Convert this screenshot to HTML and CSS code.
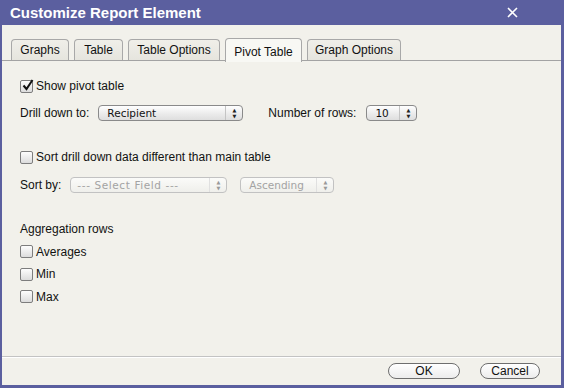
FILE: index.html
```html
<html>
    <head>
        <link rel="stylesheet" href="styles.css">
    </head>
    <body>
        <div class="dialog">
            <div class="titlebar">
                <span class="title">Customize Report Element</span>
                <svg class="close" width="11" height="11" viewBox="0 0 11 11">
                    <path d="M1 1 L10 10 M10 1 L1 10" stroke="#fff" stroke-width="1.6"/>
                </svg>
            </div>
            <div class="window">
                <div class="tabs">
                    <div class="tab" style="width:58px">Graphs</div>
                    <div class="tab" style="width:49px">Table</div>
                    <div class="tab" style="width:92px">Table Options</div>
                    <div class="tab active" style="width:77px">Pivot Table</div>
                    <div class="tab" style="width:94px">Graph Options</div>
                </div>
                <div class="panel">
                    <div class="row first">
                        <span class="check checked">
                            <svg width="13" height="13" viewBox="0 0 13 13">
                                <path d="M2.5 6.5 L5.5 10 L11.5 1" fill="none" stroke="#111" stroke-width="2"/>
                            </svg>
                        </span>
                        <span>Show pivot table</span>
                    </div>
                    <div class="row drill">
                        <span class="label">Drill down to:</span>
                        <div class="select" style="width:145px">
                            <span class="value">Recipient</span>
                            <span class="arrows">&#9650;<br>&#9660;</span>
                        </div>
                        <span class="label rows-label">Number of rows:</span>
                        <div class="select" style="width:51px">
                            <span class="value">10</span>
                            <span class="arrows">&#9650;<br>&#9660;</span>
                        </div>
                    </div>
                    <div class="row section">
                        <span class="check"></span>
                        <span>Sort drill down data different than main table</span>
                    </div>
                    <div class="row sortby">
                        <span class="label">Sort by:</span>
                        <div class="select disabled" style="width:157px">
                            <span class="value wide">--- Select Field ---</span>
                            <span class="arrows">&#9650;<br>&#9660;</span>
                        </div>
                        <div class="select disabled asc" style="width:94px">
                            <span class="value">Ascending</span>
                            <span class="arrows">&#9650;<br>&#9660;</span>
                        </div>
                    </div>
                    <div class="row section">Aggregation rows</div>
                    <div class="row item"><span class="check"></span><span>Averages</span></div>
                    <div class="row item"><span class="check"></span><span>Min</span></div>
                    <div class="row item"><span class="check"></span><span>Max</span></div>
                </div>
                <div class="footer">
                    <div class="button" style="width:72px">OK</div>
                    <div class="button" style="width:60px">Cancel</div>
                </div>
            </div>
        </div>
    </body>
</html>
```

FILE: styles.css
```css
body {
    margin: 0;
    background: #5b5f9f;
    font-family: 'Liberation Sans', Arial, sans-serif;
    font-size: 12px;
    color: #111;
}
.dialog {
    width: 564px;
    height: 388px;
    display: flex;
    flex-direction: column;
}
.titlebar {
    height: 25px;
    display: flex;
    align-items: center;
    justify-content: space-between;
    padding: 0 46px 0 10px;
}
.title {
    color: #fff;
    font-family: 'Liberation Sans', Arial, sans-serif;
    font-weight: bold;
    font-size: 15px;
}
.window {
    flex: 1;
    margin: 0 3px 3px 2px;
    background: #f2f1eb;
    display: flex;
    flex-direction: column;
}
.tabs {
    display: flex;
    gap: 5px;
    padding: 13px 0 0 9px;
    height: 22px;
    border-bottom: 1px solid #a3a3a3;
}
.tab {
    height: 21px;
    margin-top: 1px;
    box-sizing: border-box;
    border: 1px solid #a8a8a8;
    border-bottom: none;
    border-radius: 4px 4px 0 0;
    background: linear-gradient(#f0efe9, #e6e5de);
    display: flex;
    align-items: center;
    justify-content: center;
    font-size: 12px;
}
.tab.active {
    height: 24px;
    margin-top: 0;
    margin-bottom: -1px;
    background: #f8f8f4;
    padding-top: 3px;
    position: relative;
}
.panel {
    flex: 1;
    padding: 16px 0 0 18px;
    display: flex;
    flex-direction: column;
}
.row {
    display: flex;
    align-items: center;
    height: 18px;
}
.drill {
    margin-top: 9px;
}
.section {
    margin-top: 26px;
}
.sortby {
    margin-top: 10px;
}
.item {
    margin-top: 4.5px;
}
.check {
    width: 11px;
    height: 11px;
    border: 1px solid #7d7d7d;
    border-radius: 2px;
    background: linear-gradient(#fdfdfd, #dcdcdc);
    margin-right: 3px;
    position: relative;
}
.check svg {
    position: absolute;
    left: 0;
    top: -2px;
}
.label {
    margin-right: 9px;
}
.rows-label {
    margin-left: 25px;
    margin-right: 10px;
}
.select {
    height: 16px;
    box-sizing: border-box;
    border: 1px solid #8a8a8a;
    border-radius: 4px;
    background: linear-gradient(#ffffff, #eaeaea 60%, #dedede);
    display: flex;
    align-items: center;
    font-family: 'DejaVu Sans', sans-serif;
    font-size: 10.5px;
}
.select .value {
    flex: 1;
    padding-left: 8px;
}
.select .value.wide {
    padding-left: 6px;
    letter-spacing: 0.6px;
}
.select .arrows {
    width: 17px;
    height: 100%;
    border-left: 1px solid #c4c4c4;
    font-size: 5px;
    line-height: 6px;
    text-align: center;
    padding-top: 1px;
    box-sizing: border-box;
    color: #222;
}
.select.disabled {
    border-color: #c2c2c2;
    color: #a3a3a3;
    background: linear-gradient(#fbfbf9, #efefeb);
}
.select.disabled .arrows {
    color: #999;
    border-left-color: #e0e0e0;
}
.select.asc {
    margin-left: 13px;
}
.footer {
    height: 28px;
    border-top: 1px solid #c3c3c3;
    box-shadow: inset 0 1px 0 #ffffff;
    display: flex;
    align-items: center;
    justify-content: flex-end;
    gap: 20px;
    padding-right: 21px;
}
.button {
    height: 16px;
    box-sizing: border-box;
    border: 1px solid #6e6e6e;
    border-radius: 8px;
    background: linear-gradient(#ffffff, #ececec);
    display: flex;
    align-items: center;
    justify-content: center;
    font-size: 12px;
}
```
